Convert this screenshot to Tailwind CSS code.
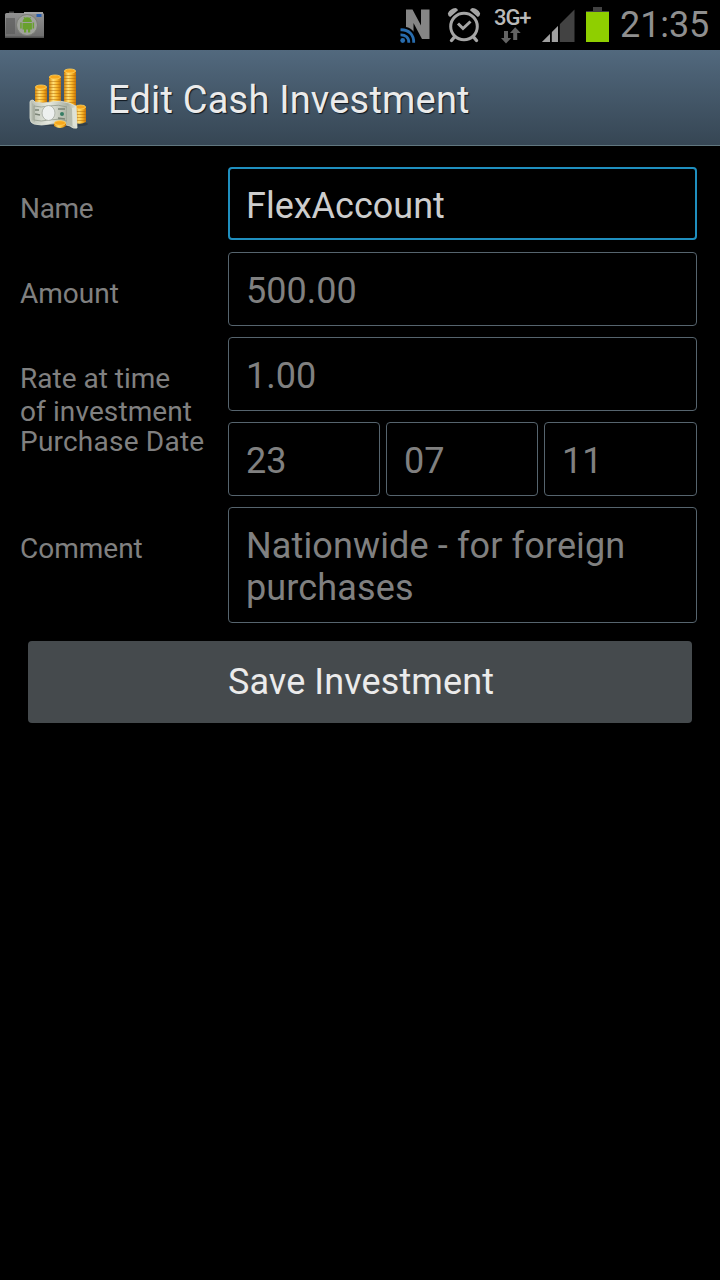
<!DOCTYPE html>
<html lang="en">

<head>
    <meta charset="UTF-8">
    <meta name="viewport" content="width=device-width, initial-scale=1.0">
    <title>Edit Cash Investment</title>
    <script src="https://cdn.jsdelivr.net/npm/@tailwindcss/browser@4"></script>
</head>

<body class="bg-black font-['Roboto',sans-serif] min-h-screen overflow-hidden">

    <!-- Status Bar -->
    <div class="h-[50px] flex items-start justify-between">
        <svg class="w-[50px] h-[50px]" viewBox="0 0 50 50">
            <defs>
                <linearGradient id="camera" x1="0" y1="0" x2="0" y2="1">
                    <stop offset="0" stop-color="#929292" />
                    <stop offset="1" stop-color="#6c6c6c" />
                </linearGradient>
            </defs>
            <path d="M9 11.500h5v2H9z" fill="#444444" />
            <rect x="5" y="13" width="39" height="25" rx="1.5" fill="url(#camera)" />
            <path d="M24 12h19v2H24z" fill="#a5a5a5" />
            <path d="M6 18h9v16H6z" fill="#5c5c5c" opacity=".7" />
            <path d="M5 36.500h39V38H5z" fill="#505050" />
            <rect x="36.500" y="14" width="5" height="3" fill="#2a60b0" />
            <circle cx="27" cy="25" r="10.500" fill="#a0a29c" stroke="#7c7e77" />
            <path d="M22.500 22a4.700 4.700 0 0 1 9.400 0zM22.500 23h9.400v6.500h-9.400zM20.200 22.500h1.500v6h-1.500zM32.600 22.500h1.500v6h-1.500zM24 29h2.200v3.500H24zM28 29h2.200v3.500H28z" fill="#69a02e" />
            <path d="M24 17l1 1.800M30.500 17l-1 1.800" stroke="#69a02e" />
        </svg>
        <div class="flex items-start">
            <!-- NFC -->
            <svg class="w-[32px] h-[50px]" viewBox="0 0 32 50">
                <path d="M6 9.500h6.500l8.500 16v-16h8.500V39H22l-8.500-16v16H6z" fill="#858585" />
                <path d="M0 27h6c6 1 10 6 10 12v4H0z" fill="#000000" />
                <g fill="none" stroke="#286cae" stroke-width="2.800">
                    <path d="M.5 29.800c8-.5 13.500 5 13.200 13" />
                    <path d="M.5 34.800c5-.2 8.500 3 8.300 8" />
                </g>
                <circle cx="2.700" cy="40.500" r="2.400" fill="#286cae" />
            </svg>
            <!-- Alarm -->
            <svg class="ml-[15px] w-[34px] h-[50px]" viewBox="0 0 34 50">
                <g fill="none" stroke="#a5a5a5">
                    <circle cx="17" cy="26.500" r="13.300" stroke-width="3" />
                    <path d="M11 23.500l5 5 7.500-7" stroke-width="3" />
                    <path d="M7 37.500l-2.500 3M27 37.500l2.500 3" stroke-width="3.400" stroke-linecap="round" />
                </g>
                <path d="M.8 13.500Q3 8.500 8.500 8q2 .2 2.500 2.200L3.200 17Q1 16 .8 13.500zM33.200 13.500Q31 8.500 25.500 8q-2 .2-2.500 2.200l7.800 6.800q2.200-1 2.400-3.500z" fill="#a5a5a5" />
            </svg>
            <!-- Network type -->
            <div class="ml-[13px] w-[38px] h-[50px] pt-[7px]">
                <div class="text-[22px] leading-[22px] font-medium text-[#b9b9b9] tracking-[-1.1px]">3G+</div>
                <svg class="-mt-[3px] ml-[7px] w-[20px] h-[18px]" viewBox="0 0 20 18">
                    <path d="M3 5h4v7h3.200L5 17.500 0 12h3zM12.200 14h4V7h3.500L14.200 1.200 9 7h3.200z" fill="#636363" />
                </svg>
            </div>
            <!-- Signal -->
            <svg class="ml-[10px] w-[34px] h-[50px]" viewBox="0 0 34 50">
                <path d="M0 42L32.500 9.500V42z" fill="#424242" />
                <path d="M0 42L16 26v16z" fill="#a0a0a0" />
                <path d="M8 25h1.800v17H8zM16 20h1.800v22H16z" fill="#000000" />
            </svg>
            <!-- Battery -->
            <svg class="ml-[10px] w-[24px] h-[50px]" viewBox="0 0 24 50">
                <path d="M7 7h9v4h7v1H0v-1h7z" fill="#424242" />
                <path d="M0 12h23v30H0z" fill="#8fcf00" />
            </svg>
            <div class="ml-[10px] w-[100px] pt-[4px] text-[36px] leading-[42px] text-[#8f8f8f] tracking-[-0.1px] whitespace-nowrap">21:35</div>
        </div>
    </div>

    <!-- Action Bar -->
    <div class="h-24 flex items-center bg-linear-to-b from-[#52697e] to-[#364654] border-b border-[#61777f]">
        <svg class="ml-5 mt-[6px] w-20 h-20" viewBox="0 0 80 80">
            <defs>
                <linearGradient id="gold" x1="0" x2="1">
                    <stop offset="0" stop-color="#d88708" />
                    <stop offset=".35" stop-color="#ffe17a" />
                    <stop offset=".65" stop-color="#fab82b" />
                    <stop offset="1" stop-color="#c97405" />
                </linearGradient>
                <linearGradient id="note" x1="0" x2="1">
                    <stop offset="0" stop-color="#b9bfb3" />
                    <stop offset=".4" stop-color="#e7eae1" />
                    <stop offset=".8" stop-color="#aab1a2" />
                    <stop offset="1" stop-color="#e5e7dc" />
                </linearGradient>
                <pattern id="coins" width="12" height="3" patternUnits="userSpaceOnUse">
                    <path d="M0 2.500h12" stroke="#b36b08" stroke-width=".8" opacity=".65" />
                </pattern>
            </defs>
            <ellipse cx="46" cy="63" rx="22" ry="3" fill="#1d2830" opacity=".4" />
            <g fill="url(#gold)">
                <path d="M15 26h12v20H15z" />
                <path d="M29 16h12v30H29z" />
                <path d="M44 10h12v38H44z" />
                <path d="M55 46h11v15q-5 3-11 1z" />
            </g>
            <path d="M15 26h12v20H15zM29 16h12v30H29zM44 10h12v38H44zM55 46h11v15H55z" fill="url(#coins)" />
            <g fill="#f7a81d" stroke="#ffd05a" stroke-width=".8">
                <ellipse cx="21" cy="26" rx="5.600" ry="2" />
                <ellipse cx="35" cy="16" rx="5.600" ry="2" />
                <ellipse cx="50" cy="10" rx="5.600" ry="2" />
                <ellipse cx="60.500" cy="46" rx="5.100" ry="2" />
            </g>
            <path d="M10 41q0-2 3-2l2 2q8 2 16 0 10-2 18 1l7 3 1 22q-4 1-7-2-9-4-20-2-9 2-16 0-4-1-4-6z" fill="url(#note)" stroke="#dfe3d7" stroke-width=".8" />
            <path d="M14 45q7 2 15 0 10-2 18 1v14q-9-3-18-1-8 2-15 0z" fill="none" stroke="#929a8b" stroke-width=".8" />
            <path d="M15 49h4M15 53l5 1M38 48h7M38 57l7 1" stroke="#7b8476" stroke-width="1.500" />
            <ellipse cx="28.500" cy="52" rx="6.500" ry="7.500" fill="#edf0ef" stroke="#b0b5ac" />
            <circle cx="42" cy="53" r="2" fill="#367c64" />
            <path d="M47 44l5 4v17l-5-2z" fill="#b5bbad" />
            <path d="M52 47l4-1 1 20-4-1z" fill="#dee2d6" />
            <path d="M12 42v17l3 2V44z" fill="#a3aa9c" opacity=".5" />
            <path d="M34 62h12v3q-6 4-12 0z" fill="url(#gold)" />
            <ellipse cx="40" cy="62" rx="5.600" ry="2.300" fill="#f7a81d" stroke="#ffd05a" stroke-width=".8" />
        </svg>
        <h1 class="ml-2 pt-1 text-[38px] leading-[46px] text-[#ebebeb] tracking-[0.2px] whitespace-nowrap [text-shadow:1px_1px_1px_#101820]">Edit Cash Investment</h1>
    </div>

    <!-- Investment Form -->
    <form class="pt-[21px] pr-[23px] pl-5 text-[28px] leading-[33px] text-[#808080]">
        <div class="grid grid-cols-[208px_1fr] gap-y-[11px]">
            <label for="name" class="pt-[25px] tracking-[-0.3px]">Name</label>
            <input type="text" id="name" value="FlexAccount" class="h-[73px] mb-px w-full min-w-0 px-4 pt-[5px] border-2 border-[#1f8fbf] rounded-[4px] text-4xl text-[#cdcdcd] outline-none">

            <label for="amount" class="pt-[25px]">Amount</label>
            <input type="text" id="amount" value="500.00" class="h-[74px] w-full min-w-0 px-[17px] pt-[3px] border border-[#56646e] rounded-[4px] text-4xl outline-none">

            <label for="rate" class="h-[74px] pt-[25px] whitespace-nowrap">Rate at time<br><span class="tracking-[0.1px]">of investment</span></label>
            <input type="text" id="rate" value="1.00" class="h-[74px] w-full min-w-0 px-[17px] pt-[3px] border border-[#56646e] rounded-[4px] text-4xl outline-none">

            <label for="day" class="pt-[3px] whitespace-nowrap tracking-[0.22px]">Purchase Date</label>
            <div class="grid grid-cols-[152px_152px_153px] gap-[6px]">
                <input type="text" id="day" value="23" class="h-[74px] w-full min-w-0 px-[17px] pt-[3px] border border-[#56646e] rounded-[4px] text-4xl outline-none">
                <input type="text" id="month" value="07" class="h-[74px] w-full min-w-0 px-[17px] pt-[3px] border border-[#56646e] rounded-[4px] text-4xl outline-none">
                <input type="text" id="year" value="11" class="h-[74px] w-full min-w-0 px-[17px] pt-[3px] border border-[#56646e] rounded-[4px] text-4xl outline-none">
            </div>

            <label for="comment" class="pt-[25px]">Comment</label>
            <textarea id="comment" class="block h-[116px] w-full px-[17px] pt-[17px] border border-[#56646e] rounded-[4px] text-4xl leading-[42px] tracking-[0.13px] resize-none overflow-hidden outline-none">Nationwide - for foreign purchases</textarea>
        </div>
        <button type="button" class="block mt-[18px] ml-2 w-[664px] h-[82px] pl-[2px] bg-[#454a4d] rounded-[4px] text-4xl tracking-[0.1px] text-[#ebebeb]">Save Investment</button>
    </form>
</body>

</html>
